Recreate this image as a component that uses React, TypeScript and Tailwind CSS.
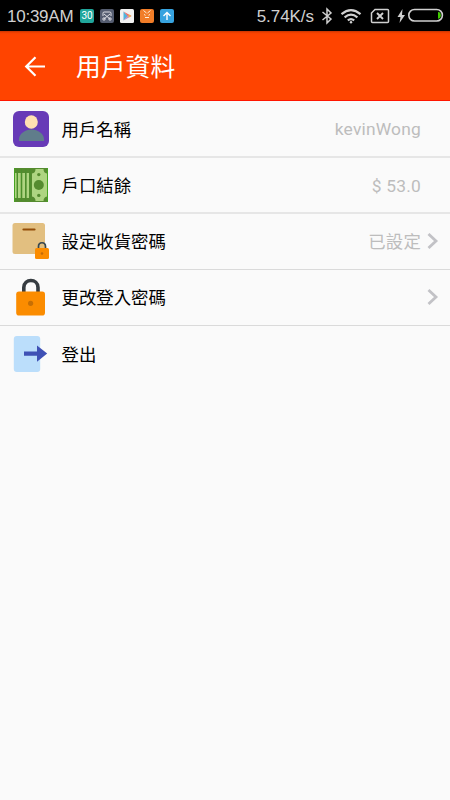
import type { ReactNode } from "react";

const UserIcon = () => (
  <svg width="38" height="38" viewBox="0 0 38 38">
    <rect x="1" y="1" width="36" height="36" rx="6" fill="#673ab7" />
    <path d="M7 31v-2c0-5 6-9.500 12.500-9.500S32 24 32 29v2z" fill="#607d8b" />
    <ellipse cx="19.300" cy="12" rx="6.500" ry="6.800" fill="#ffe0b2" />
  </svg>
);

const CashIcon = () => (
  <svg width="38" height="38" viewBox="0 0 38 38">
    <rect x="2" y="2" width="34" height="34" fill="#558b2f" />
    <path d="M2.500 7h2.200v25H2.500zM6 7h2.700v25H6zM10.300 7H13v25h-2.700zM14.500 7h2.500v25h-2.500z" fill="#aed581" />
    <path d="M5.300 3v32M9.500 3v32M13.800 3v32M18 3v32" stroke="#4c8f2c" strokeWidth="1" />
    <path d="M23.500 3h8q0 4 3.500 4.500v23q-3.500.5-3.500 4.500h-8q0-4-3.500-4.500v-23q3.500-.5 3.500-4.500z" fill="#aed581" />
    <circle cx="26.800" cy="19" r="5" fill="#558b2f" />
    <circle cx="26.800" cy="8.600" r="1.700" fill="#558b2f" />
    <circle cx="26.800" cy="29.400" r="1.700" fill="#558b2f" />
    <path d="M2.500 2v34M35.500 2v34" stroke="#45a321" strokeWidth="1" />
  </svg>
);

const BoxLockIcon = () => (
  <svg width="38" height="38" viewBox="0 0 38 38">
    <rect x=".5" y="1" width="32.500" height="31" rx="2.500" fill="#e2bf80" />
    <path d="M11.500 7.500h11" stroke="#924d08" strokeWidth="2.200" strokeLinecap="round" />
    <path d="M26.500 27v-2.500c0-5 7-5 7 0V27" fill="none" stroke="#37474f" strokeWidth="1.700" />
    <rect x="23" y="26" width="14" height="11" rx="1.500" fill="#fb8c00" />
    <circle cx="30" cy="31.500" r="1.300" fill="#c16b08" />
  </svg>
);

const LockIcon = () => (
  <svg width="38" height="38" viewBox="0 0 38 38">
    <path d="M11.800 15V9.500c0-9.300 14.200-9.300 14.200 0V15" fill="none" stroke="#363c41" strokeWidth="3.600" />
    <rect x="4.200" y="13.500" width="28.800" height="24" rx="2.800" fill="#fb8c00" />
    <circle cx="18.600" cy="25.300" r="2.600" fill="#c76f04" />
  </svg>
);

const LogoutIcon = () => (
  <svg width="38" height="38" viewBox="0 0 38 38">
    <rect x="1.800" y="1" width="26.400" height="36" rx="3" fill="#bbdefb" />
    <path d="M12 16.400h13v-5.900L35.200 18.600 25 26.700v-5.900H12z" fill="#3f51b5" />
  </svg>
);

const Chevron = () => (
  <svg width="12" height="18" viewBox="0 0 12 18" fill="none" stroke="#c2c2c6" strokeWidth="2.800">
    <path d="M1.500 2l7.500 7-7.500 7" />
  </svg>
);

type RowProps = { icon: ReactNode; label: string; value?: string; chevron?: boolean; frame: string };

const Row = ({ icon, label, value, chevron, frame }: RowProps) => (
  <li className={`flex items-center pl-3 ${frame}`}>
    {icon}
    <span className="ml-[11.500px] flex-1 pt-[2px] text-[17.400px] leading-6 text-black">{label}</span>
    {value && <span className="pt-px text-[17.400px] leading-6 tracking-[0.200px] text-[#bdbdbd]">{value}</span>}
    <span className="flex w-[29px] shrink-0 pl-[6px]">{chevron && <Chevron />}</span>
  </li>
);

const StatusBar = () => (
  <div className="flex h-[31px] items-center bg-black pl-[7px] font-['Liberation_Sans',sans-serif] text-[17px] text-[#d0d0d0]">
    <span className="w-[73px] whitespace-nowrap pt-[2px] tracking-[-0.250px]">10:39AM</span>
    <div className="flex gap-[6px]">
      <span className="flex h-[14px] w-[14px] items-center justify-center rounded-[2px] bg-[#20a69b] font-[Roboto] text-[10px] text-white">30</span>
      <svg width="14" height="14" viewBox="0 0 14 14">
        <rect width="14" height="14" rx="2" fill="#555d70" />
        <path d="M3 7V4.200Q3 3 4.200 3h5.600Q11 3 11 4.200V7M4 5l6 5M10 5l-6 5" fill="none" stroke="#dedee4" />
        <circle cx="4" cy="10" r="1.200" fill="none" stroke="#dedee4" />
        <circle cx="10" cy="10" r="1.200" fill="none" stroke="#dedee4" />
      </svg>
      <svg width="14" height="14" viewBox="0 0 14 14">
        <rect width="14" height="14" rx="1.500" fill="#f1f1f1" />
        <path d="M3.500 2.500v9L8 7z" fill="#52b4dd" />
        <path d="M3.500 2.500L11.500 7 8 7.500z" fill="#ef6b68" />
        <path d="M3.500 11.500L11.500 7 8 6.500z" fill="#c48ac0" />
        <path d="M8.500 5.300l3 1.700-3 1.700z" fill="#efb047" />
      </svg>
      <svg width="14" height="14" viewBox="0 0 14 14">
        <rect width="14" height="14" rx="2" fill="#f17d28" />
        <path d="M3.500 1.500l3 2.500M10.500 1.500l-3 2.500M4 5.500l1.500.8M10 5.500l-1.500.8M5 8.500h4" stroke="#fff0da" fill="none" />
      </svg>
      <svg width="14" height="14" viewBox="0 0 14 14">
        <rect width="14" height="14" rx="2" fill="#37a3df" />
        <path d="M7 11V3.500M3.500 7L7 3.500 10.500 7" fill="none" stroke="white" strokeWidth="1.400" />
      </svg>
    </div>
    <span className="ml-auto whitespace-nowrap pt-[2px] tracking-[-0.050px]">5.74K/s</span>
    <svg className="ml-[7px] mr-[7px] shrink-0" width="12" height="18" viewBox="0 0 12 18" fill="none" stroke="#d0d0d0" strokeWidth="1.500">
      <path d="M1.500 5l8.500 7-4 4V2l4 4-8.500 7" />
    </svg>
    <svg className="shrink-0" width="22" height="16" viewBox="0 0 22 16" fill="none" stroke="#d0d0d0" strokeWidth="2.200">
      <path d="M1.500 6.200q9.500-8 19 0M4.600 9.400q6.400-5.400 12.800 0M7.800 12.300q3.200-2.500 6.400 0" />
      <circle cx="11" cy="14.200" r="1.200" fill="#d0d0d0" stroke="none" />
    </svg>
    <svg className="ml-[8px] shrink-0" width="20" height="16" viewBox="0 0 20 16" fill="none" stroke="#d0d0d0" strokeWidth="1.500">
      <path d="M5 1.500h12.500q1 0 1 1v11q0 1-1 1h-15q-1 0-1-1V5z" />
      <path d="M7 5l6 6M13 5l-6 6" strokeWidth="1.900" />
    </svg>
    <svg className="ml-[7px] mr-[1px] shrink-0" width="9" height="14" viewBox="0 0 9 14" fill="#d0d0d0">
      <path d="M5.500 0L.5 8h3L2.500 14 8 6H5z" />
    </svg>
    <svg className="mr-[6px] shrink-0" width="37" height="15" viewBox="0 0 37 15">
      <rect x="1.800" y="1.500" width="33.600" height="11.500" rx="5.700" fill="none" stroke="#d0d0d0" strokeWidth="1.600" />
      <path d="M31 4q2.800 0 2.800 3.300T31 10.700z" fill="#40c900" />
    </svg>
  </div>
);

export default function App() {
  return (
    <div className="min-h-[800px] w-full bg-[#fafafa] font-['Roboto','Noto_Sans_CJK_TC',sans-serif]">
      <StatusBar />
      <header className="flex h-[70px] items-center border-b border-[#ff1600] bg-[#ff4400] bg-[linear-gradient(to_bottom,#c83400_0,#f84200_2px,#ff4400_4px)] pl-6">
        <svg width="22" height="22" viewBox="0 0 22 22" fill="none" stroke="white" strokeWidth="2.200">
          <path d="M21 11.500H2.500M11.500 2.200l-9.300 9.300 9.300 9.300" />
        </svg>
        <h1 className="ml-[30px] pt-[5px] text-[24.800px] font-normal leading-9 text-white">用戶資料</h1>
      </header>
      <ul>
        <Row icon={<UserIcon />} label="用戶名稱" value="kevinWong" frame="h-[57px] border-b-2 border-[#e6e6e6]" />
        <Row icon={<CashIcon />} label="戶口結餘" value="$ 53.0" frame="h-[56px] border-b-2 border-[#e6e6e6]" />
        <Row icon={<BoxLockIcon />} label="設定收貨密碼" value="已設定" chevron frame="h-[56px] border-b border-[#dadada] pb-px" />
        <Row icon={<LockIcon />} label="更改登入密碼" chevron frame="h-[56px] border-b border-[#dadada] pb-px" />
        <Row icon={<LogoutIcon />} label="登出" frame="h-[56px]" />
      </ul>
    </div>
  );
}
